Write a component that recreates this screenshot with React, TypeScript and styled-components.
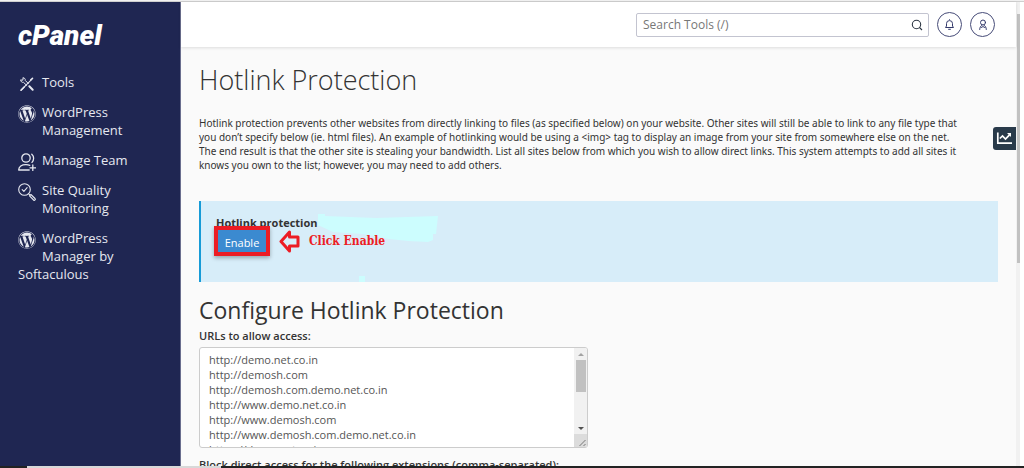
import React from "react";
import styled, { createGlobalStyle } from "styled-components";
import { FaWordpress } from "react-icons/fa";

const GlobalStyle = createGlobalStyle`
  *, *::before, *::after { box-sizing: border-box; }
  body {
    margin: 0;
    background: #fafafa;
    color: #333;
    font-family: "Open Sans", "Noto Sans", sans-serif;
    font-size: 11px;
    line-height: 14px;
  }
`;

const Frame = styled.div`
  display: flex;
  flex-direction: column;
  height: 100vh;
  overflow: hidden;
`;

const TopEdge = styled.div`
  flex: none;
  height: 2px;
  background: #f1f1f1;
  border-bottom: 1px solid #cfcfcf;
`;

const BottomEdge = styled.div`
  flex: none;
  height: 2px;
  background: linear-gradient(90deg, #222 27px, #d8d8d8 27px, #d8d8d8 221px, #222 221px);
`;

const Shell = styled.div`
  display: flex;
  flex: 1;
  min-height: 0;
`;

const Sidebar = styled.aside`
  flex: none;
  width: 181px;
  padding: 20px 18px;
  background: #1f2652;
  border-right: 1px solid #6a6e8e;
  color: #e6e8f0;
`;

const Logo = styled.a`
  display: block;
  color: #fff;
  font-family: Roboto, "Liberation Sans", sans-serif;
  font-size: 28px;
  font-style: italic;
  font-weight: 900;
  line-height: 28px;
  text-decoration: none;
`;

const Nav = styled.nav`
  display: flex;
  flex-direction: column;
  gap: 12px;
  margin-top: 23px;
`;

const NavLink = styled.a`
  display: block;
  color: inherit;
  font-size: 13px;
  line-height: 18px;
  text-decoration: none;

  &::after { content: ""; display: block; clear: both; }
`;

const NavIcon = styled.span<{ $tall?: boolean }>`
  float: left;
  width: 24px;
  height: ${(p) => (p.$tall ? 36 : 18)}px;

  svg { display: block; width: 18px; height: 18px; margin-top: 2px; }
`;

const Page = styled.div`
  display: flex;
  flex: 1;
  flex-direction: column;
  min-width: 0;
`;

const Header = styled.header`
  position: relative;
  display: flex;
  flex: none;
  align-items: center;
  justify-content: flex-end;
  gap: 8px;
  height: 45px;
  padding-right: 21px;
  background: #fff;
  box-shadow: 0 1px 3px rgba(0, 0, 0, 0.12);
`;

const SearchBox = styled.form`
  display: flex;
  align-items: center;
  width: 293px;
  height: 24px;
  border: 1px solid #c3c4d0;
  border-radius: 2px;
  background: #fff;
`;

const SearchInput = styled.input`
  flex: 1;
  min-width: 0;
  padding: 0 6px;
  border: 0;
  outline: 0;
  background: none;
  color: #333;
  font: 12px "Open Sans", "Noto Sans", sans-serif;

  &::placeholder { color: #777; opacity: 1; }
`;

const SearchButton = styled.button`
  display: flex;
  padding: 0 5px;
  border: 0;
  background: none;
  color: #2b3542;
`;

const RoundButton = styled.button`
  display: flex;
  align-items: center;
  justify-content: center;
  width: 25px;
  height: 25px;
  padding: 0;
  border: 1px solid #474c78;
  border-radius: 50%;
  background: #fff;
  color: #343a6b;
`;

const Main = styled.main`
  flex: 1;
  min-height: 0;
  overflow: hidden;
  padding: 16px 18px 0;
`;

const Title = styled.h1`
  margin: 0;
  font-size: 27px;
  font-weight: 300;
  line-height: 34px;
`;

const Intro = styled.p`
  margin: 19px 0 29px;
  font-family: "Noto Sans", "Open Sans", sans-serif;
  font-size: 10px;
`;

const Callout = styled.section`
  height: 81px;
  padding: 15px 15px 0;
  border-left: 2px solid #179bd7;
  background: #d7edf9;
`;

const CalloutHeading = styled.div`
  display: flex;
  align-items: flex-start;
  height: 10px;
  font-weight: 700;
`;

const Highlight = styled.svg`
  flex: none;
  width: 120px;
  height: 68px;
  margin-top: -2px;
`;

const CalloutRow = styled.div`
  position: relative;
  display: flex;
  align-items: center;
  gap: 9px;
  margin-left: -2px;
`;

const EnableButton = styled.button`
  width: 56px;
  height: 30px;
  padding: 2px 0 0;
  border: 4px solid #ec1c24;
  background: #3b8ad0;
  box-shadow: 0 2px 4px rgba(0, 0, 0, 0.3);
  color: #fff;
  font: 11px "Open Sans", "Noto Sans", sans-serif;
`;

const Note = styled.strong`
  color: #ec1c24;
  font-family: "DejaVu Serif Condensed", "DejaVu Serif", serif;
  font-size: 12px;
`;

const SectionTitle = styled.h2`
  margin: 13px 0 4px;
  font-size: 23px;
  font-weight: 400;
  line-height: 30px;
`;

const Label = styled.label`
  display: block;
  font-weight: 600;
`;

const AreaFrame = styled.div`
  display: flex;
  width: 389px;
  max-width: 100%;
  height: 101px;
  margin: 4px 0 10px;
  overflow: hidden;
  border: 1px solid #ccc;
  border-radius: 3px;
  background: #fff;
`;

const Area = styled.textarea`
  flex: 1;
  min-width: 0;
  padding: 4px 9px;
  border: 0;
  outline: 0;
  resize: none;
  overflow: hidden;
  background: none;
  color: #555;
  font: 11px/15px "Open Sans", "Noto Sans", sans-serif;
`;

const AreaTrack = styled.div`
  display: flex;
  flex-direction: column;
  align-items: center;
  width: 13px;
  background: #f1f1f1;
`;

const AreaThumb = styled.div`
  width: 10px;
  height: 32px;
  background: #c1c1c1;
`;

const Arrow = styled.svg`
  display: block;
  width: 12px;
  height: 12px;
`;

const DownArrow = styled(Arrow)`
  margin-top: auto;
`;

const Grip = styled(Arrow)`
  width: 13px;
  height: 13px;
  background: #dcdcdc;
`;

const PageTrack = styled.div`
  flex: none;
  width: 8px;
  padding-top: 12px;
  background: linear-gradient(90deg, #f1f1f1 4px, #fff 4px);
`;

const PageThumb = styled.div`
  width: 3px;
  height: 55%;
  margin-left: 1px;
  background: #c1c1c1;
`;

const StatsTab = styled.button`
  position: fixed;
  top: 127px;
  right: 8px;
  display: flex;
  align-items: center;
  justify-content: center;
  width: 23px;
  height: 23px;
  padding: 0;
  border: 0;
  border-radius: 3px 0 0 3px;
  background: #293a4a;
  color: #fff;
`;

const ToolsIcon = () => (
  <svg viewBox="0 0 18 18" fill="none" stroke="currentColor" strokeLinecap="round" aria-hidden="true">
    <path d="M3.200 15 13 5.200" strokeWidth="1.100" />
    <path d="m12.800 4.800 1.700-1.500M3 15.200l3-3" strokeWidth="1.600" />
    <path d="M5.200 2.800c1.400 0 2.400 1.200 2 2.600l3.200 3.200M2.700 5.200c0 1.500 1.300 2.500 2.800 2.100l3.300 3.200M3 5l1.800.2.300-2.200" strokeWidth="1" />
    <path d="m11.300 11.300 3.400 3.400" strokeWidth="2" />
  </svg>
);

const TeamIcon = () => (
  <svg viewBox="0 0 18 18" fill="none" stroke="currentColor" strokeWidth="1.300" strokeLinecap="round" aria-hidden="true">
    <circle cx="8" cy="5" r="4.200" />
    <path d="M13.800 1.200c2.400 2.200 2.400 5.800.2 8.200M.7 17c0-3.800 3-5.300 7.300-5.300 1.500 0 2.800.2 3.800.6M.7 17h10.500M12 14.800h5.500M14.800 12v5.500" />
  </svg>
);

const QualityIcon = () => (
  <svg viewBox="0 0 18 18" fill="none" stroke="currentColor" strokeWidth="1.100" strokeLinecap="round" strokeLinejoin="round" aria-hidden="true">
    <circle cx="6.500" cy="6.500" r="5.800" />
    <path d="m4.200 6.600 1.700 1.700 3.200-3.600M10.700 10.800l1.400 1.400M11.500 12.900l1.400-1.400 4.100 4c.9 1-.4 2.400-1.400 1.500z" />
  </svg>
);

const SearchIcon = () => (
  <svg width="12" height="12" viewBox="0 0 12 12" fill="none" stroke="currentColor" strokeWidth="1.100" aria-hidden="true">
    <circle cx="5.500" cy="5.500" r="4.200" />
    <path d="m8.500 8.500 2.500 2.500" />
  </svg>
);

const BellIcon = () => (
  <svg width="11" height="12" viewBox="0 0 11 12" fill="none" stroke="currentColor" strokeLinejoin="round" aria-hidden="true">
    <path d="M1.500 8.500h8l-1-1.500V4.600a3 3 0 0 0-6 0V7zM5.500 1V.3M4.200 10.300h2.600" />
  </svg>
);

const UserIcon = () => (
  <svg width="10" height="12" viewBox="0 0 10 12" fill="none" stroke="currentColor" strokeLinecap="round" aria-hidden="true">
    <circle cx="5" cy="3.500" r="2.500" />
    <path d="M1.700 10.500c0-2.200 1-3.500 2.300-4.300M8.300 10.500C8.300 8.300 7.300 7 6 6.200M3.500 8.500 5 7.500l1.500 1" />
  </svg>
);

const StatsIcon = () => (
  <svg width="17" height="15" viewBox="0 0 17 15" fill="none" stroke="currentColor" strokeWidth="1.700" aria-hidden="true">
    <path d="M1.800 1.500v10.700H16M3.800 7.500 6.500 5l3 3 4-4.200" />
    <path d="M11 2h4v4z" fill="currentColor" stroke="none" />
  </svg>
);

const navItems = [
  { label: "Tools", icon: <ToolsIcon /> },
  { label: "WordPress Management", icon: <FaWordpress />, tall: true },
  { label: "Manage Team", icon: <TeamIcon /> },
  { label: "Site Quality Monitoring", icon: <QualityIcon />, tall: true },
  { label: "WordPress Manager by Softaculous", icon: <FaWordpress />, tall: true },
];

const urls = [
  "http://demo.net.co.in",
  "http://demosh.com",
  "http://demosh.com.demo.net.co.in",
  "http://www.demo.net.co.in",
  "http://www.demosh.com",
  "http://www.demosh.com.demo.net.co.in",
  "https://demo.net.co.in",
].join("\n");

export default function App() {
  return (
    <Frame>
      <GlobalStyle />
      <TopEdge />
      <Shell>
        <Sidebar>
          <Logo href="#">cPanel</Logo>
          <Nav>
            {navItems.map((item) => (
              <NavLink href="#" key={item.label}>
                <NavIcon $tall={item.tall}>{item.icon}</NavIcon>
                {item.label}
              </NavLink>
            ))}
          </Nav>
        </Sidebar>
        <Page>
          <Header>
            <SearchBox role="search">
              <SearchInput type="text" placeholder="Search Tools (/)" aria-label="Search Tools" />
              <SearchButton type="button" aria-label="Search"><SearchIcon /></SearchButton>
            </SearchBox>
            <RoundButton type="button" aria-label="Notifications"><BellIcon /></RoundButton>
            <RoundButton type="button" aria-label="Account"><UserIcon /></RoundButton>
          </Header>
          <Main>
            <Title>Hotlink Protection</Title>
            <Intro>
              Hotlink protection prevents other websites from directly linking to files (as specified below) on your
              website. Other sites will still be able to link to any file type that
              <br />
              you don’t specify below (ie. html files). An example of hotlinking would be using a &lt;img&gt; tag to
              display an image from your site from somewhere else on the net.
              <br />
              The end result is that the other site is stealing your bandwidth. List all sites below from which you
              wish to allow direct links. This system attempts to add all sites it
              <br />
              knows you own to the list; however, you may need to add others.
            </Intro>
            <Callout>
              <CalloutHeading>
                Hotlink protection
                <Highlight viewBox="4 0 120 68" fill="#ccfdfe" aria-hidden="true">
                  <path d="M0 0h11v2l51 2 62-2-2 18h-3v6l-5 2-20-1-19-2-26-5-30-2L6 12 0 10zM45 62h6v6h-6z" />
                </Highlight>
              </CalloutHeading>
              <CalloutRow>
                <EnableButton type="button">Enable</EnableButton>
                <svg width="21" height="25" viewBox="0 0 21 25" fill="none" stroke="#ec1c24" strokeWidth="3" strokeLinejoin="round" aria-hidden="true">
                  <path d="M2 12.500 10.500 3v5H19v9h-8.500v5z" />
                </svg>
                <Note>Click Enable</Note>
              </CalloutRow>
            </Callout>
            <SectionTitle>Configure Hotlink Protection</SectionTitle>
            <Label htmlFor="allowed-urls">URLs to allow access:</Label>
            <AreaFrame>
              <Area id="allowed-urls" defaultValue={urls} />
              <AreaTrack aria-hidden="true">
                <Arrow viewBox="0 0 12 12" fill="#a3a3a3"><path d="m3 8 3-3 3 3z" /></Arrow>
                <AreaThumb />
                <DownArrow viewBox="0 0 12 12" fill="#505050"><path d="m3 5 3 3 3-3z" /></DownArrow>
                <Grip viewBox="0 0 12 13" fill="none" stroke="#777"><path d="m5 12 6-6M9 12l2-2" /></Grip>
              </AreaTrack>
            </AreaFrame>
            <Label htmlFor="blocked-extensions">Block direct access for the following extensions (comma-separated):</Label>
            <SearchInput id="blocked-extensions" type="text" />
          </Main>
        </Page>
        <PageTrack aria-hidden="true"><PageThumb /></PageTrack>
      </Shell>
      <BottomEdge />
      <StatsTab type="button" aria-label="Statistics"><StatsIcon /></StatsTab>
    </Frame>
  );
}
